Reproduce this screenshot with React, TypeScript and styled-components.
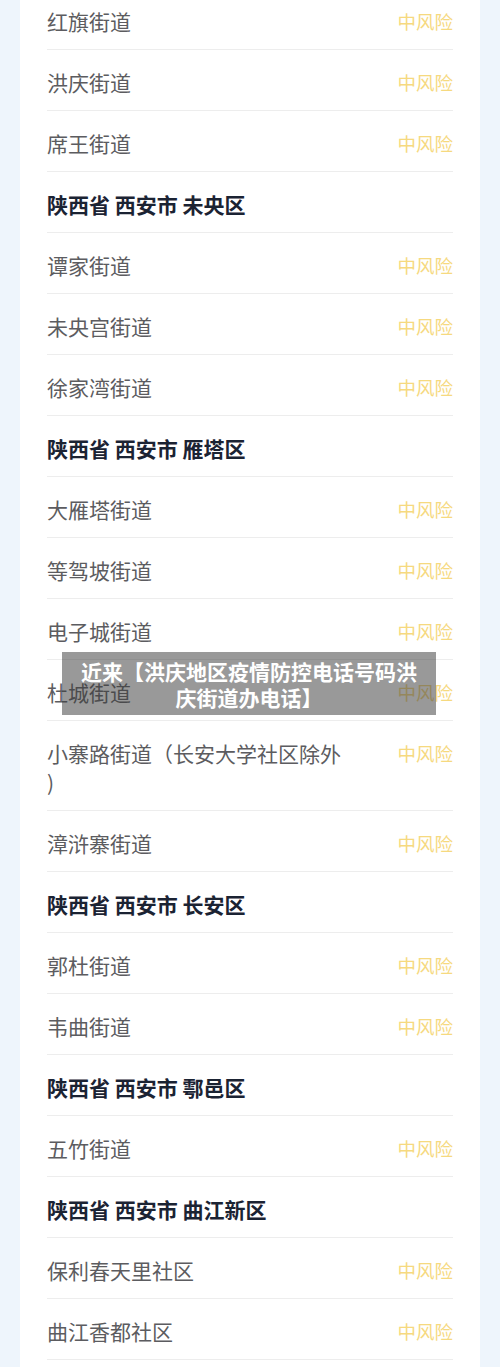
import styled, { createGlobalStyle } from "styled-components";

const GlobalStyle = createGlobalStyle`
  html, body {
    margin: 0;
    padding: 0;
    background: #eef5fc;
    font-family: "Noto Sans CJK SC", "Noto Sans", sans-serif;
  }
`;

const Page = styled.div`
  position: relative;
  width: 500px;
  height: 1367px;
  overflow: hidden;
  background: #eef5fc;
`;

const Card = styled.div`
  margin: -11px 20px 0;
  background: #ffffff;
  padding: 0 27px;
  min-height: 1400px;
`;

const Row = styled.div`
  display: flex;
  justify-content: space-between;
  align-items: center;
  padding: 18px 0 13px;
  border-bottom: 1px solid #ededed;
`;

const Name = styled.div<{ $header?: boolean }>`
  max-width: 296px;
  font-size: 21px;
  line-height: 29px;
  line-break: anywhere;
  font-weight: ${(p) => (p.$header ? 700 : 400)};
  color: ${(p) => (p.$header ? "#1b2333" : "#5c5c60")};
`;

const Risk = styled.div`
  font-size: 18.5px;
  line-height: 29px;
  color: #f6d97f;
  align-self: flex-start;
`;

const Banner = styled.div`
  position: absolute;
  left: 62px;
  top: 652px;
  width: 374px;
  height: 63px;
  box-sizing: border-box;
  padding: 6px 10px;
  background: rgba(60, 60, 60, 0.52);
  color: #ffffff;
  font-size: 21px;
  font-weight: 700;
  line-height: 26px;
  text-align: center;
`;

type Item = { name: string; header?: boolean };

const items: Item[] = [
  { name: "红旗街道" },
  { name: "洪庆街道" },
  { name: "席王街道" },
  { name: "陕西省 西安市 未央区", header: true },
  { name: "谭家街道" },
  { name: "未央宫街道" },
  { name: "徐家湾街道" },
  { name: "陕西省 西安市 雁塔区", header: true },
  { name: "大雁塔街道" },
  { name: "等驾坡街道" },
  { name: "电子城街道" },
  { name: "杜城街道" },
  { name: "小寨路街道（长安大学社区除外)" },
  { name: "漳浒寨街道" },
  { name: "陕西省 西安市 长安区", header: true },
  { name: "郭杜街道" },
  { name: "韦曲街道" },
  { name: "陕西省 西安市 鄠邑区", header: true },
  { name: "五竹街道" },
  { name: "陕西省 西安市 曲江新区", header: true },
  { name: "保利春天里社区" },
  { name: "曲江香都社区" },
];

export default function App() {
  return (
    <Page>
      <GlobalStyle />
      <Card>
        {items.map((item, i) => (
          <Row key={i}>
            <Name $header={item.header}>{item.name}</Name>
            {!item.header && <Risk>中风险</Risk>}
          </Row>
        ))}
      </Card>
      <Banner>近来【洪庆地区疫情防控电话号码洪庆街道办电话】</Banner>
    </Page>
  );
}
